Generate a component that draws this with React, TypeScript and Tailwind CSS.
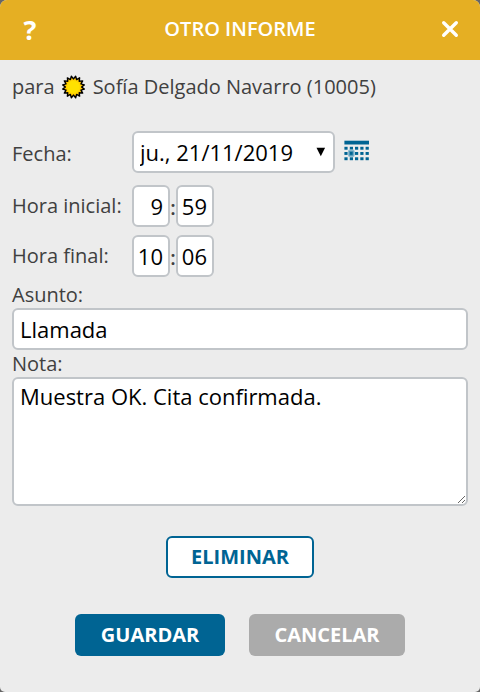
import { Fragment, type ReactNode } from 'react';

const fieldClass =
  'h-[42px] rounded-md border-2 border-[#c1c5c9] bg-white text-[22px] text-black outline-none';

// 16 spikes, alternating outer and inner radius
const sunPoints = Array.from({ length: 32 }, (_, i) => {
  const radius = i % 2 === 0 ? 11 : 8.1;
  const angle = (i * Math.PI) / 16 + Math.PI / 16;
  return `${(11.5 + radius * Math.sin(angle)).toFixed(2)},${(12 - radius * Math.cos(angle)).toFixed(2)}`;
}).join(' ');

function SunIcon() {
  return (
    <svg width="24" height="24" viewBox="0 0 24 24" className="shrink-0">
      <defs>
        <radialGradient id="sun">
          <stop offset="0.5" stopColor="#ffe100" />
          <stop offset="0.9" stopColor="#ffb400" />
        </radialGradient>
      </defs>
      <polygon points={sunPoints} fill="url(#sun)" stroke="#000" strokeWidth="1.4" strokeLinejoin="round" />
    </svg>
  );
}

function CalendarIcon() {
  return (
    <svg width="26" height="22" viewBox="0 0 26 22">
      <rect x="0.4" y="0.7" width="24.6" height="3.8" fill="#006493" />
      {[6.8, 12, 17.3].map((y) => (
        <Fragment key={y}>
          {[0.4, 5.8, 11, 16.3, 21.6].map((x) => (
            <rect key={x} x={x} y={y} width="3.2" height="2.9" fill="#006493" />
          ))}
        </Fragment>
      ))}
      <rect x="4.5" y="10.2" width="5.6" height="6.2" rx="1.5" fill="#4b93b5" stroke="#8dbbd0" strokeWidth="1.2" />
      <rect x="6" y="12" width="2.6" height="2.8" fill="#006493" />
    </svg>
  );
}

interface TimeRowProps {
  label: string;
  hour: string;
  minute: string;
}

function TimeRow({ label, hour, minute }: TimeRowProps) {
  return (
    <div className="flex h-[42px] items-center">
      <label className="w-[120px] shrink-0">{label}</label>
      <input className={`${fieldClass} w-[38px] pr-[5px] text-right`} defaultValue={hour} />
      <span className="w-1.5 pt-[3px] text-center font-semibold">:</span>
      <input className={`${fieldClass} w-[38px] pr-[5px] text-right`} defaultValue={minute} />
    </div>
  );
}

function Button({ className, children }: { className: string; children: ReactNode }) {
  return (
    <button className={`h-[42px] rounded-md pb-px text-xl font-bold ${className}`}>
      {children}
    </button>
  );
}

export default function App() {
  return (
    <div className="h-[692px] w-[480px] bg-[#666]">
      <div className="flex h-full flex-col overflow-hidden rounded-t-[7px] rounded-b-[5px] bg-[#ececec] font-['Open_Sans',sans-serif] text-xl font-normal text-[#404040]">
        {/* Header */}
        <header className="flex h-[60px] shrink-0 items-center justify-between bg-[#e5af23] px-5 text-white">
          <button className="w-5 pb-0.5 text-[27px] leading-none font-bold">?</button>
          <h1 className="pb-0.5 text-xl font-semibold">OTRO INFORME</h1>
          <button className="flex w-5 justify-center pb-0.5" aria-label="Cerrar">
            <svg width="18" height="18" viewBox="0 0 18 18" stroke="#fff" strokeWidth="3.4" strokeLinecap="round">
              <path d="M2.7 2.7 15.3 15.3M15.3 2.7 2.7 15.3" />
            </svg>
          </button>
        </header>

        <main className="flex flex-col px-3">
          <div className="flex h-[54px] items-center gap-[7px]">
            <span>para</span>
            <SunIcon />
            <span>Sofía Delgado Navarro (10005)</span>
          </div>

          {/* Date and times */}
          <div className="mt-[17px] flex h-[42px] items-center">
            <label className="w-[120px] shrink-0 pt-[3px]">Fecha:</label>
            <div className="relative">
              <select className={`${fieldClass} w-[203px] appearance-none pl-1.5`} defaultValue="21/11/2019">
                <option value="21/11/2019">ju., 21/11/2019</option>
              </select>
              <svg className="pointer-events-none absolute top-4 right-[9px]" width="10" height="10" viewBox="0 0 10 10">
                <path d="M0.5 0.8h8.6L4.8 9.2z" fill="#000" />
              </svg>
            </div>
            <button className="ml-[9px] pb-0.5" aria-label="Calendario">
              <CalendarIcon />
            </button>
          </div>
          <div className="mt-3 flex flex-col gap-2">
            <TimeRow label="Hora inicial:" hour="9" minute="59" />
            <TimeRow label="Hora final:" hour="10" minute="06" />
          </div>

          {/* Subject and note */}
          <label className="mt-1 h-[27px] leading-[27px]">Asunto:</label>
          <input className={`${fieldClass} w-full px-1.5`} defaultValue="Llamada" />
          <label className="h-[27px] leading-[27px]">Nota:</label>
          <textarea
            className="block h-[129px] w-full resize rounded-md border-2 border-[#c1c5c9] bg-white px-1.5 py-0.5 text-[22px] leading-[30px] text-black outline-none"
            defaultValue="Muestra OK. Cita confirmada."
          />

          {/* Actions */}
          <div className="mt-[30px] flex justify-center">
            <Button className="w-[148px] border-2 border-[#006493] bg-white text-[#006493]">ELIMINAR</Button>
          </div>
          <div className="mt-9 flex justify-center gap-6">
            <Button className="w-[150px] bg-[#006493] text-white">GUARDAR</Button>
            <Button className="w-[156px] bg-[#ababab] text-white">CANCELAR</Button>
          </div>
        </main>
      </div>
    </div>
  );
}
